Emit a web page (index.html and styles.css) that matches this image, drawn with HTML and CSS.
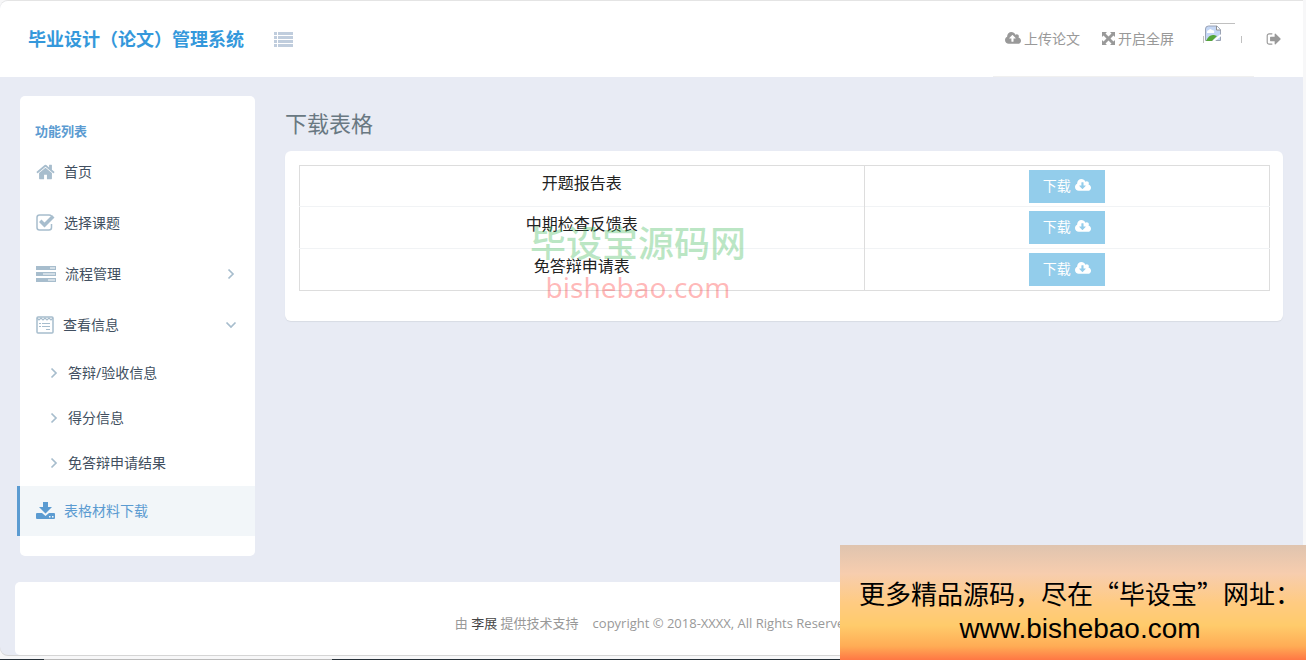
FILE: index.html
```html
<!DOCTYPE html>
<html lang="zh-CN">

<head>
    <meta charset="UTF-8">
    <meta name="viewport" content="width=device-width, initial-scale=1.0">
    <title>毕业设计（论文）管理系统</title>
    <link rel="stylesheet" href="styles.css">
</head>

<body>
    <!-- 图标 -->
    <svg class="sprite" aria-hidden="true">
        <symbol id="cloud-up" viewBox="0 0 1920 1792">
            <path d="M1280 864q0-14-9-23l-352-352q-9-9-23-9t-23 9l-351 351q-10 12-10 24 0 14 9 23t23 9h224v352q0 13 9.5 22.5t22.5 9.5h192q13 0 22.5-9.5t9.5-22.5v-352h224q13 0 22.5-9.5t9.5-22.5zm640 288q0 159-112.5 271.5t-271.5 112.5h-1088q-185 0-316.5-131.5t-131.5-316.5q0-130 70-240t188-165q-2-30-2-43 0-212 150-362t362-150q156 0 285.5 87t188.5 231q71-62 166-62 106 0 181 75t75 181q0 76-41 138 130 31 213.5 135.5t83.5 238.5z"/>
        </symbol>
        <symbol id="cloud-down" viewBox="0 0 1920 1792">
            <path d="M1280 928q0-14-9-23t-23-9h-224v-352q0-13-9.5-22.5t-22.5-9.5h-192q-13 0-22.5 9.5t-9.5 22.5v352h-224q-13 0-22.5 9.5t-9.5 22.5q0 14 9 23l352 352q9 9 23 9t23-9l351-351q10-12 10-24zm640 224q0 159-112.5 271.5t-271.5 112.5h-1088q-185 0-316.5-131.5t-131.5-316.5q0-130 70-240t188-165q-2-30-2-43 0-212 150-362t362-150q156 0 285.5 87t188.5 231q71-62 166-62 106 0 181 75t75 181q0 76-41 138 130 31 213.5 135.5t83.5 238.5z"/>
        </symbol>
        <symbol id="chevron" viewBox="0 0 8 12">
            <path d="M1.500 1.500L6 6l-4.500 4.500" fill="none" stroke="currentColor" stroke-width="1.700"/>
        </symbol>
    </svg>

    <div class="page">
        <header class="header">
            <h1 class="logo">毕业设计（论文）管理系统</h1>
            <button class="toggle" type="button" aria-label="菜单">
                <svg width="19" height="15" viewBox="0 0 19 15"><path d="M0 0h3v3H0zM4 0h15v3H4zM0 4h3v3H0zM4 4h15v3H4zM0 8h3v3H0zM4 8h15v3H4zM0 12h3v3H0zM4 12h15v3H4z"/></svg>
            </button>
            <nav class="tools">
                <a href="#"><svg width="16" height="15"><use href="#cloud-up"/></svg>上传论文</a>
                <a href="#"><svg width="13" height="13" viewBox="0 0 13 13"><path d="M0 0h5L3.500 1.500 6.500 4.500l3-3L8 0h5v5l-1.500-1.500-3 3 3 3L13 8v5H8l1.500-1.500-3-3-3 3L5 13H0V8l1.500 1.500 3-3-3-3L0 5z"/></svg>开启全屏</a>
                <svg class="avatar" width="39" height="39" viewBox="0 0 39 39" role="img" aria-label="头像">
                    <path d="M7 .5h25M.5 13v7M38.500 13v7" stroke="#c0c0c0"/>
                    <path d="M2.500 17.500V6q0-3 3-3H14l3.500 3.500v11z" fill="#c5d7f5" stroke="#9aa3b5"/>
                    <path d="M13.500 3v4h4" fill="#fff" stroke="#909090"/>
                    <path d="M4 9q0-2 2-2 1-2 3 0 3 0 2 3H4z" fill="#fff"/>
                    <path d="M3 18q3-7 8-6l3 1-5 5z" fill="#55a63a"/>
                    <path d="M10 18.500l8-6.500" stroke="#fff" stroke-width="2"/>
                </svg>
            </nav>
            <a class="logout" href="#" aria-label="退出">
                <svg width="15" height="16" viewBox="0 0 1664 1792"><path d="M704 1440q0 4 1 20t.5 26.500-3 23.500-10 19.500-20.500 6.500h-320q-119 0-203.500-84.500t-84.500-203.500v-704q0-119 84.500-203.500t203.500-84.500h320q13 0 22.500 9.500t9.500 22.500q0 4 1 20t.5 26.500-3 23.500-10 19.500-20.500 6.500h-320q-66 0-113 47t-47 113v704q0 66 47 113t113 47h312l11.500 1 11.500 3 8 5.500 7 9 2 13.500zm928-544q0 26-19 45l-544 544q-19 19-45 19t-45-19-19-45v-288h-448q-26 0-45-19t-19-45v-384q0-26 19-45t45-19h448v-288q0-26 19-45t45-19 45 19l544 544q19 19 19 45z"/></svg>
            </a>
        </header>

        <div class="body">
            <aside class="sidebar">
                <h2 class="menu-title">功能列表</h2>
                <ul class="menu">
                    <li><a href="#">
                        <svg width="19" height="20" viewBox="0 0 1664 1792"><path d="M1408 992v480q0 26-19 45t-45 19h-384v-384h-256v384h-384q-26 0-45-19t-19-45v-480q0-1 .5-3t.5-3l575-474 575 474q1 2 1 6zm223-69l-62 74q-8 9-21 11h-3q-13 0-21-7l-692-577-692 577q-12 8-24 7-13-2-21-11l-62-74q-8-10-7-23.500t11-21.500l719-599q32-26 76-26t76 26l244 204v-195q0-14 9-23t23-9h192q14 0 23 9t9 23v408l219 182q10 8 11 21.500t-7 23.500z"/></svg>
                        首页</a></li>
                    <li><a href="#">
                        <svg width="19" height="18" viewBox="0 0 19 18"><path d="M15.500 2Q14.500 1 13 1H3.500Q1 1 1 3.500v10Q1 16 3.500 16H13q2.500 0 2.500-2.500V10" fill="none" stroke="currentColor" stroke-width="1.500"/><path d="M3 8l2.500-2.500L8.500 8.500l7.500-7.500 2.500 2.500L8.500 13.500z"/></svg>
                        选择课题</a></li>
                    <li><a href="#">
                        <svg width="20" height="18" viewBox="0 0 20 18"><path fill-rule="evenodd" d="M0 1h20v4H0zM14 2.500v1h5v-1zM0 7h20v4H0zM7 8.500v1h12v-1zM0 13h20v4H0zM12 14.500v1h7v-1z"/></svg>
                        流程管理
                        <svg class="arrow" width="8" height="12"><use href="#chevron"/></svg></a></li>
                    <li><a href="#">
                        <svg width="18" height="18" viewBox="0 0 18 18"><g fill="none" stroke="currentColor"><rect x="1" y="1" width="16" height="16" rx="1" stroke-width="1.500"/><path d="M1 2l2 2 2-2 2 2 2-2 2 2 2-2 2 2 2-2" stroke-width="1.200"/><path d="M3 7.500h2M6 7.500h8M3 10.500h2M6 10.500h8M10 13.500h4"/></g></svg>
                        查看信息
                        <svg class="arrow down" width="8" height="12"><use href="#chevron"/></svg></a>
                        <ul class="submenu">
                            <li><a href="#"><svg width="8" height="12"><use href="#chevron"/></svg>答辩/验收信息</a></li>
                            <li><a href="#"><svg width="8" height="12"><use href="#chevron"/></svg>得分信息</a></li>
                            <li><a href="#"><svg width="8" height="12"><use href="#chevron"/></svg>免答辩申请结果</a></li>
                        </ul>
                    </li>
                    <li class="active"><a href="#">
                        <svg width="19" height="18" viewBox="0 0 19 18"><path fill-rule="evenodd" d="M7 0h5v5h4L9.500 11.500 3 5h4zM0 12q0-1 1-1h5l3.500 3L13 11h5q1 0 1 1v4q0 1-1 1H1q-1 0-1-1zM13 14v1.500h1.500V14zM16 14v1.500h1.500V14z"/></svg>
                        表格材料下载</a></li>
                </ul>
            </aside>

            <main class="content">
                <h2 class="title">下载表格</h2>
                <div class="card">
                    <table class="files">
                        <tbody>
                            <tr>
                                <td>开题报告表</td>
                                <td><button class="btn" type="button">下载 <svg width="16" height="15"><use href="#cloud-down"/></svg></button></td>
                            </tr>
                            <tr>
                                <td>中期检查反馈表</td>
                                <td><button class="btn" type="button">下载 <svg width="16" height="15"><use href="#cloud-down"/></svg></button></td>
                            </tr>
                            <tr>
                                <td>免答辩申请表</td>
                                <td><button class="btn" type="button">下载 <svg width="16" height="15"><use href="#cloud-down"/></svg></button></td>
                            </tr>
                        </tbody>
                    </table>
                    <!-- 水印 -->
                    <div class="watermark">
                        <span class="wm-name">毕设宝源码网</span>
                        <span class="wm-url">bishebao.com</span>
                    </div>
                </div>
            </main>
        </div>

        <footer class="footer">
            <span>由 <a href="#">李展</a> 提供技术支持</span>
            <span>copyright © 2018-XXXX, All Rights Reserved</span>
        </footer>
    </div>

    <div class="taskbar"></div>

    <!-- 右下角广告 -->
    <div class="banner">
        <p>更多精品源码，尽在“毕设宝”网址：</p>
        <p class="banner-url">www.bishebao.com</p>
    </div>
</body>

</html>
```
FILE: styles.css
```css
* {
    box-sizing: border-box;
}

body {
    display: flex;
    flex-direction: column;
    min-height: 100vh;
    margin: 0;
    padding: 1px 3px 0 0;
    background-color: #f7f7f8;
    color: #333;
    font-family: "Noto Sans", "Noto Sans CJK SC", sans-serif;
    font-size: 14px;
    line-height: 20px;
    overflow: hidden;
}

h1, h2, p, ul {
    margin: 0;
    padding: 0;
}

ul {
    list-style: none;
}

a {
    color: inherit;
    text-decoration: none;
}

svg {
    flex-shrink: 0;
    fill: currentColor;
}

button {
    border: none;
    font-family: inherit;
    cursor: pointer;
}

.sprite {
    display: none;
}

.page {
    display: flex;
    flex-direction: column;
    flex: 1;
    background-color: #e8ebf4;
    border-radius: 8px 0 0 8px;
    box-shadow: 0 1px 0 #d5d5d5, 0 -1px 0 #e4e4e4;
    overflow: hidden;
}

/* header */
.header {
    display: flex;
    align-items: center;
    height: 76px;
    padding: 0 22px 0 28px;
    background-color: #fff;
    color: #999;
}

.logo {
    color: #3498db;
    font-size: 18px;
    line-height: 26px;
}

.toggle {
    margin-left: 30px;
    padding: 0;
    background: none;
    color: #c0cddd;
    line-height: 0;
}

.tools {
    display: flex;
    align-items: center;
    gap: 22px;
    height: 76px;
    margin-left: auto;
    padding: 0 12px;
    border-bottom: 1px solid #f0f0f0;
}

.tools a {
    display: flex;
    align-items: center;
    gap: 3px;
}

.avatar {
    margin: 8px 0 0 7px;
    fill: none;
}

.logout {
    display: flex;
    margin-left: 12px;
}

/* sidebar */
.body {
    display: flex;
    align-items: flex-start;
    flex: 1;
    gap: 30px;
    padding: 19px 20px 26px;
}

.sidebar {
    width: 235px;
    padding-bottom: 20px;
    background-color: #fff;
    border-radius: 5px;
    color: #414f60;
}

.menu-title {
    padding: 25px 15px 6px;
    color: #5b9bd1;
    font-size: 13px;
    line-height: 20px;
}

.menu > li {
    margin-bottom: 1px;
}

.menu > li:last-child {
    margin-bottom: 0;
}

.menu a {
    display: flex;
    align-items: center;
    gap: 9px;
    height: 50px;
    padding: 0 20px 0 16px;
}

.menu svg {
    color: #a7bdcd;
}

.menu .arrow {
    margin-left: auto;
}

.menu .down {
    transform: rotate(90deg);
}

.menu .submenu a {
    gap: 10px;
    height: 45px;
    padding-left: 30px;
}

.menu .active {
    margin-left: -3px;
    background-color: #f2f6f9;
    border-left: 3px solid #5b9bd1;
}

.menu .active,
.menu .active svg {
    color: #5b9bd1;
}

/* content */
.content {
    flex: 1;
}

.title {
    padding: 12px 0 13px;
    color: #697882;
    font-size: 22px;
    font-weight: normal;
    line-height: 30px;
}

.card {
    position: relative;
    padding: 14px 13px 30px 14px;
    background-color: #fff;
    border-radius: 6px;
    box-shadow: 0 1px 1px #d8dce4;
}

.files {
    width: 100%;
    border: 1px solid #ddd;
    border-collapse: collapse;
    table-layout: fixed;
    text-align: center;
}

.files td {
    padding: 4px;
    border-top: 1px solid #f1f3f5;
    color: #222;
    font-size: 16px;
    line-height: 26px;
    vertical-align: top;
}

.files tr:first-child td {
    padding-bottom: 3px;
    border-top-color: #ddd;
}

.files td:first-child {
    width: 58.2%;
    border-right: 1px solid #ddd;
}

.btn {
    display: inline-flex;
    align-items: center;
    gap: 4px;
    height: 33px;
    padding: 0 14px 2px;
    background-color: #93cdeb;
    color: #fff;
    font-size: 14px;
    line-height: 20px;
    vertical-align: top;
}

.watermark {
    position: absolute;
    top: 68px;
    left: 245px;
    display: flex;
    flex-direction: column;
    align-items: center;
    pointer-events: none;
}

.wm-name {
    color: rgba(60, 185, 85, 0.35);
    font-size: 36px;
    font-weight: 500;
    line-height: 50px;
}

.wm-url {
    color: rgba(255, 70, 70, 0.38);
    font-size: 28px;
    line-height: 36px;
}

/* footer */
.footer {
    display: flex;
    justify-content: center;
    gap: 14px;
    margin: 0 15px;
    padding: 31px 0 22px 4px;
    background-color: #fff;
    border-radius: 5px;
    color: #999;
    font-family: "Open Sans", "Noto Sans CJK SC", sans-serif;
    font-size: 13px;
}

.footer a {
    color: #444;
}

.taskbar {
    height: 5px;
    margin-right: -3px;
    background: linear-gradient(90deg, #263038 44px, #bbb 44px, #bbb 332px, #263038 332px) bottom / 100% 1px no-repeat;
}

/* banner */
.banner {
    position: absolute;
    right: 0;
    bottom: 0;
    width: 466px;
    height: 115px;
    padding: 30px 0 0 14px;
    background: linear-gradient(#dfc4af, #f7cdae 25%, #ffcb82 50%, #ffcb6b 70%, #ffac55 88%, #ff7744);
    color: #000;
    font-family: "Noto Sans CJK SC", sans-serif;
    font-size: 26px;
    line-height: 36px;
    text-align: center;
    white-space: nowrap;
}

.banner-url {
    padding-right: 0;
    font-family: "Liberation Sans", sans-serif;
    font-size: 28px;
}
```
